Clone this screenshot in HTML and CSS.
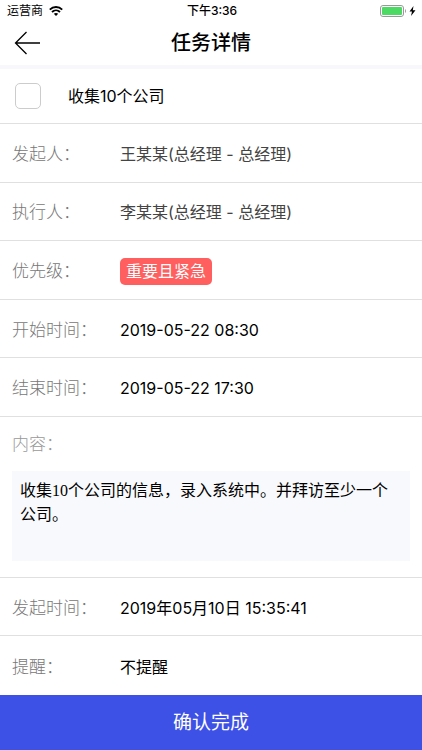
FILE: index.html
```html
<!DOCTYPE html>
<html lang="zh-CN">
<head>
<meta charset="utf-8">
<meta name="viewport" content="width=device-width, initial-scale=1">
<title>任务详情</title>
<link rel="stylesheet" href="styles.css">
</head>
<body>
<div class="status">
  <div class="carrier">
    <span>运营商</span>
    <svg class="wifi" width="14" height="10" viewBox="0 0 14 10" aria-hidden="true">
      <path d="M0.8 3.6C4.3 0.2 9.7 0.2 13.2 3.6M3 6C5.3 3.8 8.7 3.8 11 6" fill="none" stroke="#000" stroke-width="1.9"/>
      <path d="M4.8 7.8C6.1 6.6 7.9 6.6 9.2 7.8L7 10Z"/>
    </svg>
  </div>
  <span class="clock">下午3:36</span>
  <div class="power">
    <svg width="37" height="12" viewBox="0 0 37 12" aria-hidden="true">
      <rect x="0.5" y="0.5" width="23" height="11" rx="2.5" fill="#fff" stroke="#999"/>
      <rect x="2" y="2" width="20" height="8" rx="1" fill="#4cd964"/>
      <path d="M25 4C26.3 4.6 26.3 7.4 25 8Z" fill="#999"/>
      <path d="M33.5 1L29.5 6.6H32L31 11L35.5 5.2H32.8Z"/>
    </svg>
  </div>
</div>
<header class="nav">
  <button class="back" type="button" aria-label="返回">
    <svg width="27" height="24" viewBox="0 0 27 24" aria-hidden="true">
      <path d="M26 12H1.5M12.5 1L1.5 12L12.5 23" fill="none" stroke="#000" stroke-width="1.3"/>
    </svg>
  </button>
  <h1>任务详情</h1>
</header>
<main class="detail">
  <label class="task">
    <input type="checkbox">
    <span>收集10个公司</span>
  </label>
  <dl class="fields">
    <div class="row"><dt>发起人：</dt><dd class="person">王某某(总经理 - 总经理)</dd></div>
    <div class="row"><dt>执行人：</dt><dd class="person">李某某(总经理 - 总经理)</dd></div>
    <div class="row"><dt>优先级：</dt><dd><span class="badge">重要且紧急</span></dd></div>
    <div class="row"><dt>开始时间：</dt><dd>2019-05-22 08:30</dd></div>
    <div class="row"><dt>结束时间：</dt><dd>2019-05-22 17:30</dd></div>
    <div class="content"><dt>内容：</dt><dd>收集10个公司的信息，录入系统中。并拜访至少一个公司。</dd></div>
    <div class="row"><dt>发起时间：</dt><dd>2019年05月10日 15:35:41</dd></div>
    <div class="row"><dt>提醒：</dt><dd>不提醒</dd></div>
  </dl>
</main>
<button class="confirm" type="button">确认完成</button>
</body>
</html>
```
FILE: styles.css
```css
* {
  box-sizing: border-box;
}

body {
  margin: 0;
  min-height: 100vh;
  display: flex;
  flex-direction: column;
  background: #fff;
  color: #000;
  font: 16px/24px Inter, "Noto Sans CJK SC", sans-serif;
}

button {
  border: 0;
  font: inherit;
  cursor: pointer;
}

.status {
  display: grid;
  grid-template-columns: 1fr auto 1fr;
  align-items: center;
  height: 21px;
  padding: 0 5px 0 7px;
  font-size: 12px;
  line-height: 20px;
}

.carrier {
  display: flex;
  align-items: center;
  gap: 6px;
}

.clock {
  font-weight: 500;
}

.power {
  display: flex;
  justify-content: flex-end;
}

.nav {
  display: grid;
  grid-template-columns: 56px 1fr 56px;
  align-items: center;
  height: 48px;
  border-bottom: 4px solid #f8f8fc;
}

.back {
  display: flex;
  padding: 0 0 0 14px;
  background: none;
}

h1 {
  margin: 0;
  font-size: 20px;
  line-height: 28px;
  font-weight: 500;
  text-align: center;
}

.detail,
.fields {
  flex: 1;
  display: flex;
  flex-direction: column;
}

.fields,
dd {
  margin: 0;
}

.task {
  display: flex;
  align-items: center;
  gap: 27px;
  height: 55px;
  padding: 0 15px;
  border-bottom: 1px solid #e0e0e0;
}

.task input {
  appearance: none;
  width: 26px;
  height: 26px;
  margin: 0;
  border: 1px solid #ccc;
  border-radius: 5px;
  background: #fff;
}

.task input:checked {
  background: #3d51e6;
}

.row {
  flex: 1 0 50px;
  display: grid;
  grid-template-columns: 108px 1fr;
  align-items: center;
  padding: 2px 12px 0;
  border-bottom: 1px solid #e0e0e0;
}

.row:last-child {
  border-bottom: 0;
}

dt {
  color: #777;
  font-size: 17px;
  font-weight: 300;
}

.person {
  color: #444;
}

.badge {
  display: inline-block;
  padding: 0 6px;
  border-radius: 5px;
  background: #ff5f5f;
  color: #fff;
  line-height: 27px;
  vertical-align: middle;
}

.content {
  padding: 15px 12px 16px;
  border-bottom: 1px solid #e0e0e0;
}

.content dt {
  color: #999;
}

.content dd {
  min-height: 90px;
  margin-top: 15px;
  padding: 8px;
  background: #f8f9fc;
  font-family: "Liberation Serif", "Noto Sans CJK SC", serif;
}

.confirm {
  height: 55px;
  background: #3d51e6;
  color: #fff;
  font-size: 19px;
}
```
